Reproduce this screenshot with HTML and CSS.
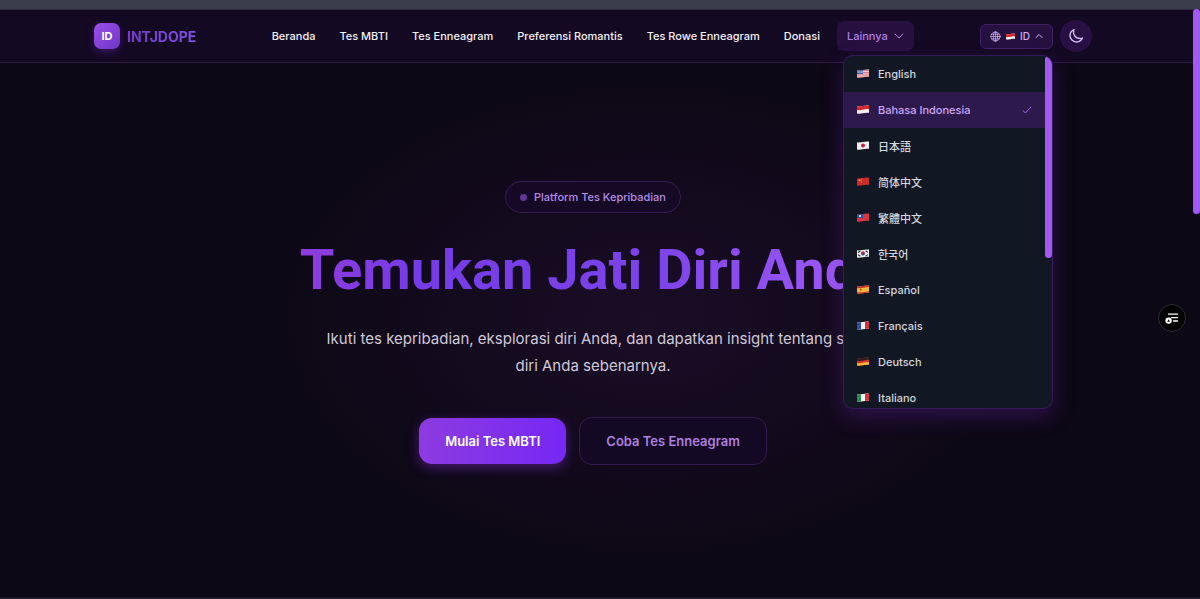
FILE: index.html
```
<!DOCTYPE html>
<html lang="id">
<head>
	<meta charset="UTF-8">
	<meta name="viewport" content="width=device-width, initial-scale=1">
	<title>INTJDOPE</title>
	<link rel="stylesheet" href="styles.css">
</head>
<body>
	<div class="topbar"></div>
	<header class="header">
		<div class="container">
			<a class="logo" href="#">
				<span class="logo-mark">ID</span>
				<span class="logo-name">INTJDOPE</span>
			</a>
			<nav class="nav">
				<a href="#">Beranda</a>
				<a href="#">Tes MBTI</a>
				<a href="#">Tes Enneagram</a>
				<a href="#">Preferensi Romantis</a>
				<a href="#">Tes Rowe Enneagram</a>
				<a href="#">Donasi</a>
				<button class="more" type="button">Lainnya
					<svg width="10" height="10" viewBox="0 0 10 10"><path d="M1 3l4 4 4-4"/></svg>
				</button>
			</nav>
			<div class="tools">
				<div class="lang">
					<button class="lang-btn" type="button" aria-expanded="true">
						<svg class="globe" width="11" height="11" viewBox="0 0 12 12"><circle cx="6" cy="6" r="5"/><ellipse cx="6" cy="6" rx="2.3" ry="5"/><path d="M1 6h10M6 1v10M1.8 3.5h8.4M1.8 8.5h8.4"/></svg>
						<svg class="flag small" viewBox="0 0 12 9"><g clip-path="url(#wave)"><path fill="#f5f1f3" d="M0 0h12v9H0z"/><path fill="#d6282e" d="M0 0h12v4.2C8 3.4 5 6 0 5z"/></g></svg>
						<span>ID</span>
						<svg class="caret" width="8" height="8" viewBox="0 0 8 8"><path d="M1 5.5l3-3 3 3"/></svg>
					</button>
					<div class="menu">
						<ul>
							<li><button type="button">
								<svg class="flag" viewBox="0 0 12 9"><g clip-path="url(#wave)"><path fill="#f1e4e8" d="M0 0h12v9H0z"/><path stroke="#d34f5b" stroke-width=".8" d="M0 1.6h12M0 3.4h12M0 5.2h12M0 7h12M0 8.6h12"/><path fill="#3f62b0" d="M0 0h6v5H0z"/><path stroke="#c9d5ef" stroke-width=".6" stroke-dasharray=".6 .8" d="M.6 2.2h5M1 3.4h5"/></g></svg>
								English</button></li>
							<li><button class="active" type="button">
								<svg class="flag" viewBox="0 0 12 9"><g clip-path="url(#wave)"><path fill="#f5f1f3" d="M0 0h12v9H0z"/><path fill="#d6282e" d="M0 0h12v4.2C8 3.4 5 6 0 5z"/></g></svg>
								Bahasa Indonesia
								<svg class="check" width="10" height="10" viewBox="0 0 10 10"><path d="M1 5.6l2.4 2.4L9 2"/></svg></button></li>
							<li><button type="button" lang="ja">
								<svg class="flag" viewBox="0 0 12 9"><g clip-path="url(#wave)"><path fill="#f3f1f4" d="M0 0h12v9H0z"/><circle fill="#c5223c" cx="6" cy="4.5" r="2"/></g></svg>
								日本語</button></li>
							<li><button type="button" lang="zh-Hans">
								<svg class="flag" viewBox="0 0 12 9"><g clip-path="url(#wave)"><path fill="#c92b27" d="M0 0h12v9H0z"/><circle fill="#f0b13c" cx="2.5" cy="3.2" r=".9"/><path stroke="#e9963a" stroke-width=".6" stroke-dasharray=".5 .6" d="M4.6 1.8v4"/></g></svg>
								简体中文</button></li>
							<li><button type="button" lang="zh-Hant">
								<svg class="flag" viewBox="0 0 12 9"><g clip-path="url(#wave)"><path fill="#d93443" d="M0 0h12v9H0z"/><path fill="#2b4fae" d="M0 0h6v5H0z"/><circle fill="#fff" cx="3" cy="3" r="1.1"/></g></svg>
								繁體中文</button></li>
							<li><button type="button" lang="ko">
								<svg class="flag" viewBox="0 0 12 9"><g clip-path="url(#wave)"><path fill="#f1f0f2" d="M0 0h12v9H0z"/><circle fill="#2c4b94" cx="6" cy="4.5" r="1.9"/><path fill="#c9283c" d="M4.1 4.5a1.9 1.9 0 0 1 3.8 0z"/><path stroke="#2a2a30" stroke-width="1.1" d="M1.5 3.3l1.5-1M9 2l1.4 1M1.5 6l1.5 1M9 6.9l1.4-1"/></g></svg>
								한국어</button></li>
							<li><button type="button">
								<svg class="flag" viewBox="0 0 12 9"><g clip-path="url(#wave)"><path fill="#f2b93b" d="M0 0h12v9H0z"/><path fill="#cc3330" d="M0 0h12v2C8 1.6 5 4 0 3zM0 7c5 1 8-1 12-.5V9H0z"/><circle fill="#a5532a" cx="3.8" cy="4.7" r="1"/></g></svg>
								Español</button></li>
							<li><button type="button">
								<svg class="flag" viewBox="0 0 12 9"><g clip-path="url(#wave)"><path fill="#f4f2f5" d="M0 0h12v9H0z"/><path fill="#2b4fa8" d="M0 0h4v9H0z"/><path fill="#d6343f" d="M8 0h4v9H8z"/></g></svg>
								Français</button></li>
							<li><button type="button">
								<svg class="flag" viewBox="0 0 12 9"><g clip-path="url(#wave)"><path fill="#d3302c" d="M0 0h12v9H0z"/><path fill="#26201f" d="M0 0h12v2.8C8 2.2 5 4.6 0 3.8z"/><path fill="#f3b738" d="M0 6c5 .8 8-1.4 12-.8V9H0z"/></g></svg>
								Deutsch</button></li>
							<li><button type="button">
								<svg class="flag" viewBox="0 0 12 9"><g clip-path="url(#wave)"><path fill="#f4f2f5" d="M0 0h12v9H0z"/><path fill="#2b8a4b" d="M0 0h4v9H0z"/><path fill="#d6343f" d="M8 0h4v9H8z"/></g></svg>
								Italiano</button></li>
						</ul>
						<div class="menu-thumb"></div>
					</div>
				</div>
				<button class="theme" type="button" aria-label="Mode gelap">
					<svg width="16" height="16" viewBox="0 0 24 24"><path d="M21.75 15A9.7 9.7 0 0 1 18 15.75 9.75 9.75 0 0 1 9 2.25 9.75 9.75 0 1 0 21.75 15z"/></svg>
				</button>
			</div>
		</div>
	</header>
	<main class="hero">
		<div class="badge"><i class="dot"></i>Platform Tes Kepribadian</div>
		<h1>Temukan Jati Diri Anda</h1>
		<p>Ikuti tes kepribadian, eksplorasi diri Anda, dan dapatkan insight tentang sisi diri Anda sebenarnya.</p>
		<div class="actions">
			<a class="btn primary" href="#">Mulai Tes MBTI</a>
			<a class="btn outline" href="#">Coba Tes Enneagram</a>
		</div>
	</main>
	<div class="page-thumb"></div>
	<button class="float-btn" type="button" aria-label="Daftar">
		<svg width="14" height="14" viewBox="0 0 14 14"><path stroke="#fff" stroke-width="1.3" d="M3.5 3.2h9M6.5 6.6h6M8.5 10h4"/><circle cx="3.6" cy="9.6" r="3.2" fill="#fff"/><path fill="#000" d="M3.6 8.2L5 10.8H2.2z"/></svg>
	</button>
	<svg class="defs" width="0" height="0">
		<clipPath id="wave"><path d="M0 1.2C4 2.2 7-.2 12 .6v7.2C7 7 4 9.4 0 8.4z"/></clipPath>
	</svg>
</body>
</html>
```

FILE: styles.css
```
*{
	box-sizing: border-box;
}
body{
	margin: 0;
	min-height: 100vh;
	display: flex;
	flex-direction: column;
	background: #0d0816;
	border-bottom: 2px solid #1c1a2c;
	color: #f3f0f8;
	font-family: Inter, "Noto Sans CJK SC", sans-serif;
	font-size: 11px;
}
a{
	color: inherit;
	text-decoration: none;
}
button{
	font: inherit;
	color: inherit;
	border: 0;
	padding: 0;
	background: none;
	cursor: pointer;
}
svg{
	flex: none;
	fill: none;
	stroke-linecap: round;
	stroke-linejoin: round;
}
.defs{
	position: absolute;
}
.topbar{
	height: 9px;
	background: #3b3d4c;
}
.header{
	height: 54px;
	padding-right: 14px;
	background: #130922;
	border-top: 1px solid #30293f;
	border-bottom: 1px solid #2b1946;
}
.container{
	max-width: 998px;
	height: 100%;
	margin: 0 auto;
	display: flex;
	align-items: center;
	justify-content: space-between;
}
.logo{
	display: flex;
	align-items: center;
	gap: 7px;
}
.logo-mark{
	width: 26px;
	height: 26px;
	border-radius: 7px;
	background: linear-gradient(135deg, #9b50e8, #6f35c8);
	box-shadow: 0 3px 9px rgba(147,51,234,0.3);
	color: #fff;
	font-weight: 700;
	line-height: 26px;
	text-align: center;
}
.logo-name{
	font-size: 14px;
	font-weight: 700;
	background: linear-gradient(90deg, #7839cd, #8050e4);
	-webkit-background-clip: text;
	background-clip: text;
	color: transparent;
}
.nav{
	display: flex;
	align-items: center;
	gap: 6px;
	font-weight: 500;
}
.nav a{
	padding: 8px 9px;
}
.more{
	height: 30px;
	padding: 0 10px;
	margin-left: 2px;
	display: flex;
	align-items: center;
	gap: 6px;
	border-radius: 7px;
	background: #271040;
	color: #b07de8;
}
.more svg,
.globe,
.caret,
.check,
.theme svg{
	stroke: currentColor;
}
.tools{
	display: flex;
	align-items: center;
	gap: 7px;
}
.lang{
	position: relative;
}
.lang-btn{
	height: 25px;
	padding: 0 9px;
	display: flex;
	align-items: center;
	gap: 5px;
	border: 1px solid #412064;
	border-radius: 6px;
	background: #251040;
	color: #cdb0ee;
	font-size: 10px;
	font-weight: 500;
}
.globe{
	stroke-width: 0.8;
}
.flag{
	width: 12px;
	height: 9px;
}
.small{
	width: 9px;
	height: 7px;
}
.menu{
	position: absolute;
	z-index: 2;
	top: 100%;
	right: 0;
	width: 210px;
	height: 354px;
	margin-top: 6px;
	overflow: hidden;
	border: 1px solid #321b56;
	border-radius: 10px;
	background: #121724;
	box-shadow: 0 8px 20px rgba(107,33,168,0.35);
}
.menu ul{
	margin: 0;
	padding: 0;
	list-style: none;
}
.menu button{
	width: 100%;
	height: 36px;
	padding: 0 20px 0 13px;
	display: flex;
	align-items: center;
	gap: 9px;
	color: #d3d6de;
	font-weight: 500;
}
.menu .active{
	background: #2d194b;
	color: #cda8f8;
}
.check{
	margin-left: auto;
	color: #a560f0;
}
.menu-thumb{
	position: absolute;
	top: 0;
	right: 0;
	width: 7px;
	height: 202px;
	border-radius: 4px;
	background: #a259f2;
}
.theme{
	width: 32px;
	height: 32px;
	display: flex;
	align-items: center;
	justify-content: center;
	border-radius: 50%;
	background: #281044;
	color: #d6b8f8;
}
.theme svg{
	stroke-width: 2;
}
.hero{
	flex: 1;
	padding: 118px 14px 60px 0;
	display: flex;
	flex-direction: column;
	align-items: center;
	text-align: center;
	background: radial-gradient(370px 240px at 54% 48%, #1a0d26, #0d0816);
}
.badge{
	height: 32px;
	padding: 0 14px;
	display: flex;
	align-items: center;
	gap: 7px;
	border: 1px solid #371b55;
	border-radius: 16px;
	background: #150926;
	color: #b58ce4;
	font-weight: 500;
}
.dot{
	width: 7px;
	height: 7px;
	border-radius: 50%;
	background: #63359a;
}
h1{
	margin: 22px 0 20px;
	font-family: Roboto, Inter, sans-serif;
	font-size: 56px;
	line-height: 70px;
	font-weight: 700;
	background: linear-gradient(90deg, #8f3bdc, #753be6 20%, #7c43ea 60%, #a35cf7);
	-webkit-background-clip: text;
	background-clip: text;
	color: transparent;
}
.hero p{
	max-width: 550px;
	margin: 0;
	color: #cfc9d8;
	font-size: 15px;
	line-height: 27px;
}
.actions{
	margin-top: 38px;
	display: flex;
	align-items: center;
	gap: 13px;
}
.btn{
	padding: 0 26px;
	border-radius: 13px;
	font-size: 13px;
	font-weight: 600;
	line-height: 46px;
}
.primary{
	background: linear-gradient(90deg, #8d3be0, #7628f5);
	box-shadow: 0 4px 12px rgba(147,51,234,0.4);
	color: #fff;
}
.outline{
	border: 1px solid #33194c;
	background: #140924;
	color: #ac80df;
}
.page-thumb{
	position: absolute;
	top: 9px;
	right: 0;
	width: 7px;
	height: 205px;
	border-radius: 4px;
	background: #a259f2;
}
.float-btn{
	position: fixed;
	right: 14px;
	top: 304px;
	width: 28px;
	height: 28px;
	display: flex;
	align-items: center;
	justify-content: center;
	border: 1px solid #2d2936;
	border-radius: 50%;
	background: #000;
}
```
